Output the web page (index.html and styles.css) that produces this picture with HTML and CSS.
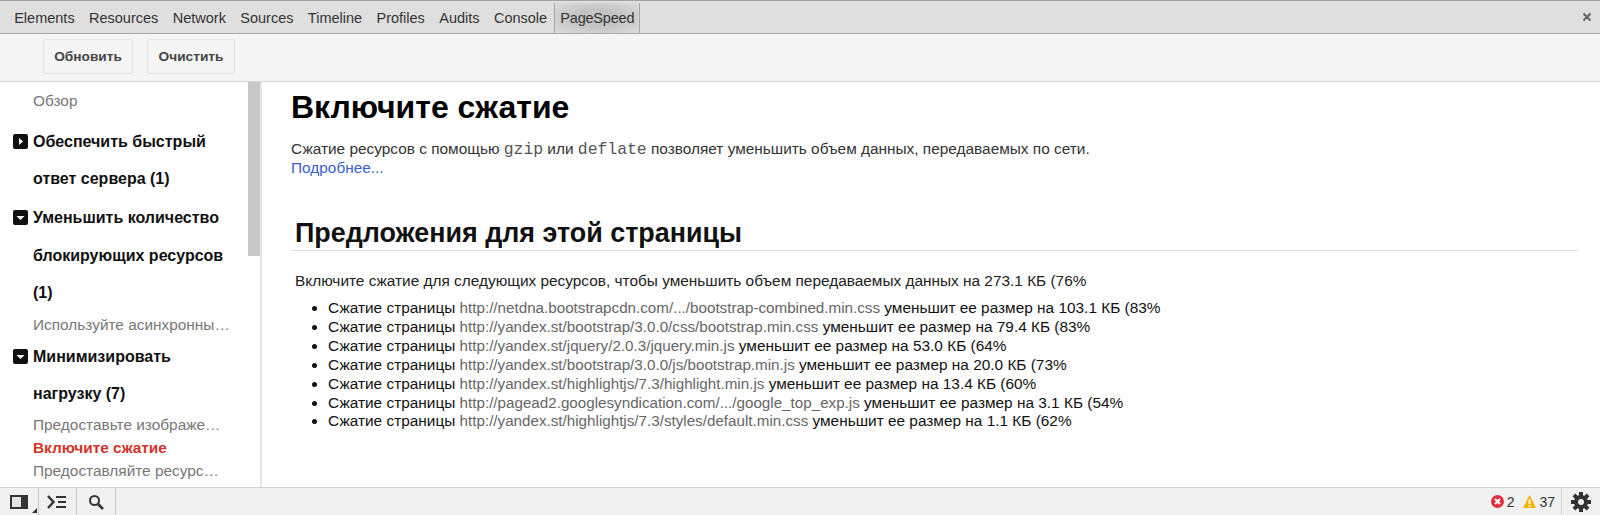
FILE: index.html
```html
<!DOCTYPE html>
<html lang="ru">
<head>
<meta charset="utf-8">
<title>PageSpeed</title>
<link rel="stylesheet" href="styles.css">
</head>
<body>
<div class="app">
  <nav class="tabs">
    <span class="tab">Elements</span>
    <span class="tab">Resources</span>
    <span class="tab">Network</span>
    <span class="tab">Sources</span>
    <span class="tab">Timeline</span>
    <span class="tab">Profiles</span>
    <span class="tab">Audits</span>
    <span class="tab">Console</span>
    <span class="tab tab-active">PageSpeed</span>
    <svg class="close" width="10" height="10" viewBox="0 0 10 10"><path d="M1.5 1.5l7 7M8.5 1.5l-7 7" stroke="#666" stroke-width="2.2" fill="none"/></svg>
  </nav>
  <div class="toolbar">
    <button class="btn btn-first">Обновить</button>
    <button class="btn">Очистить</button>
  </div>
  <div class="content">
    <aside class="sidebar">
      <div class="side-scroll">
        <div class="sub sub-top">Обзор</div>
        <div class="rule"><span class="tw"><svg width="15" height="15" viewBox="0 0 15 15"><rect width="15" height="15" rx="2" fill="#111"/><path d="M6 4l4 3.5-4 3.5z" fill="#fff"/></svg></span>Обеспечить быстрый ответ сервера (1)</div>
        <div class="rule"><span class="tw"><svg width="15" height="15" viewBox="0 0 15 15"><rect width="15" height="15" rx="2" fill="#111"/><path d="M3.500 6h8l-4 4z" fill="#fff"/></svg></span>Уменьшить количество блокирующих ресурсов (1)</div>
        <div class="sub">Используйте асинхронны…</div>
        <div class="rule"><span class="tw"><svg width="15" height="15" viewBox="0 0 15 15"><rect width="15" height="15" rx="2" fill="#111"/><path d="M3.500 6h8l-4 4z" fill="#fff"/></svg></span>Минимизировать нагрузку (7)</div>
        <div class="sub">Предоставьте изображе…</div>
        <div class="sub sub-active">Включите сжатие</div>
        <div class="sub">Предоставляйте ресурс…</div>
      </div>
      <div class="scrollbar"></div>
    </aside>
    <main class="main">
      <h1 class="title">Включите сжатие</h1>
      <p class="intro">Сжатие ресурсов с помощью <code class="mono">gzip</code> или <code class="mono">deflate</code> позволяет уменьшить объем данных, передаваемых по сети.<br><a class="more">Подробнее...</a></p>
      <h2 class="section">Предложения для этой страницы</h2>
      <p class="lead">Включите сжатие для следующих ресурсов, чтобы уменьшить объем передаваемых данных на 273.1 КБ (76%</p>
      <ul class="list">
        <li>Сжатие страницы <a>http://netdna.bootstrapcdn.com/.../bootstrap-combined.min.css</a> уменьшит ее размер на 103.1 КБ (83%</li>
        <li>Сжатие страницы <a>http://yandex.st/bootstrap/3.0.0/css/bootstrap.min.css</a> уменьшит ее размер на 79.4 КБ (83%</li>
        <li>Сжатие страницы <a>http://yandex.st/jquery/2.0.3/jquery.min.js</a> уменьшит ее размер на 53.0 КБ (64%</li>
        <li>Сжатие страницы <a>http://yandex.st/bootstrap/3.0.0/js/bootstrap.min.js</a> уменьшит ее размер на 20.0 КБ (73%</li>
        <li>Сжатие страницы <a>http://yandex.st/highlightjs/7.3/highlight.min.js</a> уменьшит ее размер на 13.4 КБ (60%</li>
        <li>Сжатие страницы <a>http://pagead2.googlesyndication.com/.../google_top_exp.js</a> уменьшит ее размер на 3.1 КБ (54%</li>
        <li>Сжатие страницы <a>http://yandex.st/highlightjs/7.3/styles/default.min.css</a> уменьшит ее размер на 1.1 КБ (62%</li>
      </ul>
    </main>
  </div>
  <footer class="status">
    <span class="st-btn st-dock"><svg width="18" height="14" viewBox="0 0 18 14"><path d="M1 1h16v12H1z" fill="#e4e4e4" stroke="#333" stroke-width="2"/><path d="M11 1h6v12h-6z" fill="#333"/></svg><i class="corner"></i></span>
    <span class="st-btn"><svg width="20" height="14" viewBox="0 0 20 14"><path d="M1 1l5.500 6-5.500 6" fill="none" stroke="#333" stroke-width="2.400"/><path d="M9 2h10M11 7h8M9 12h10" stroke="#333" stroke-width="2.200"/></svg></span>
    <span class="st-btn"><svg width="16" height="16" viewBox="0 0 16 16"><circle cx="6.500" cy="6.500" r="4.500" fill="none" stroke="#333" stroke-width="2"/><path d="M10 10l5 5" stroke="#333" stroke-width="2.600"/></svg></span>
    <span class="spacer"></span>
    <span class="count"><svg width="13" height="13" viewBox="0 0 13 13"><circle cx="6.500" cy="6.500" r="6.500" fill="#e0303c"/><path d="M4 4l5 5M9 4l-5 5" stroke="#fff" stroke-width="2"/></svg>2</span>
    <span class="count count-warn"><svg width="13" height="13" viewBox="0 0 13 13"><path d="M6.500 0L13 13H0z" fill="#f5b400"/><path d="M6.500 4.500v4.500M6.500 10v2" stroke="#fff" stroke-width="1.800"/></svg>37</span>
    <span class="st-gear"><svg width="20" height="20" viewBox="0 0 20 20"><g fill="#333"><circle cx="10" cy="10" r="7"/><path d="M8 0h4v4H8zM8 16h4v4H8zM0 8h4v4H0zM16 8h4v4h-4z"/><path d="M8 0h4v4H8zM8 16h4v4H8zM0 8h4v4H0zM16 8h4v4h-4z" transform="rotate(45 10 10)"/></g><circle cx="10" cy="10" r="3" fill="#efefef"/></svg></span>
  </footer>
</div>
</body>
</html>
```
FILE: styles.css
```css
* { box-sizing: border-box; }
html, body { margin: 0; height: 100%; overflow: hidden; background: #fff; }
body { font-family: "Liberation Sans", Arial, sans-serif; font-size: 15.4px; color: #222; }
.app { display: flex; flex-direction: column; height: 515px; }

.tabs { flex: 0 0 34px; display: flex; align-items: stretch; padding: 2px 0 0 7px; background: #dfdfdf; border-top: 1px solid #a3a3a3; border-bottom: 1px solid #a9a9a9; }
.tab { display: flex; align-items: center; padding: 0 7.200px; font-size: 14.500px; color: #333; }
.tab-active { padding: 0 5px; margin-left: 0; background: radial-gradient(ellipse at center, #c4c4c4 40%, #dcdcdc 100%); border-left: 1px solid #a8a8a8; border-right: 1px solid #a8a8a8; letter-spacing: -0.2px; }
.close { margin: 9px 8px 0 auto; }

.toolbar { flex: 0 0 48px; display: flex; align-items: flex-start; gap: 14px; padding: 5px 0 0 43px; background: #f5f5f5; border-bottom: 1px solid #d4d4d4; }
.btn { height: 35px; padding: 0; font: bold 13.700px "Liberation Sans", Arial, sans-serif; color: #444; background: #f5f5f5; border: 1px solid #e2e2e2; border-radius: 2px; }
.btn-first { width: 90px; }
.btn + .btn { width: 88px; }

.content { flex: 1; display: flex; min-height: 0; }
.sidebar { position: relative; flex: 0 0 262px; overflow: hidden; border-right: 2px solid #e6e6e6; }
.side-scroll { width: 231px; padding: 0 0 0 33px; }
.sub { height: 23px; line-height: 23px; font-size: 15.400px; color: #777; white-space: nowrap; }
.sub-top { margin-top: 7px; margin-bottom: 10.500px; }
.sub-active { color: #d0352a; font-weight: bold; }
.rule { position: relative; margin: 2px 0 1px; font-size: 16px; font-weight: bold; color: #111; line-height: 37.400px; }
.tw { position: absolute; left: -20px; top: 11px; height: 15px; }
.tw svg { display: block; }
.scrollbar { position: absolute; top: 0; left: 248px; width: 12px; height: 174px; background: #c8c8c8; }

.main { flex: 1; min-width: 0; padding: 0 22px 0 29px; color: #222; }
.title { margin: 6px 0 0; font-size: 32px; line-height: 38px; font-weight: bold; color: #000; }
.intro { margin: 14px 0 0; line-height: 18px; color: #333; }
.mono { font-family: "Liberation Mono", monospace; font-size: 16.400px; color: #555; }
.more { color: #3a5fcd; }
.section { margin: 40px 0 0; padding: 0 0 1px 4px; font-size: 26.900px; line-height: 32px; font-weight: bold; color: #111; border-bottom: 1px solid #ddd; }
.lead { margin: 20px 0 0 4px; line-height: 19px; color: #222; }
.list { margin: 9px 0 0; padding: 0 0 0 37px; line-height: 18.900px; color: #111; }
.list a { color: #666; font-size: 15.200px; }

.status { flex: 0 0 28px; display: flex; align-items: stretch; background: #f1f1f1; border-top: 1px solid #d0d0d0; }
.st-btn { position: relative; display: flex; align-items: center; justify-content: center; width: 38.500px; border-right: 1px solid #c8c8c8; }
.corner { position: absolute; right: 1px; bottom: 2px; border-left: 5px solid transparent; border-bottom: 5px solid #333; }
.spacer { flex: 1; }
.count { display: flex; align-items: center; gap: 3px; margin-right: 9px; font-size: 14px; color: #333; }
.count-warn { margin-right: 6px; }
.st-gear { display: flex; align-items: center; justify-content: center; width: 39px; border-left: 1px solid #d6d6d6; }
```
